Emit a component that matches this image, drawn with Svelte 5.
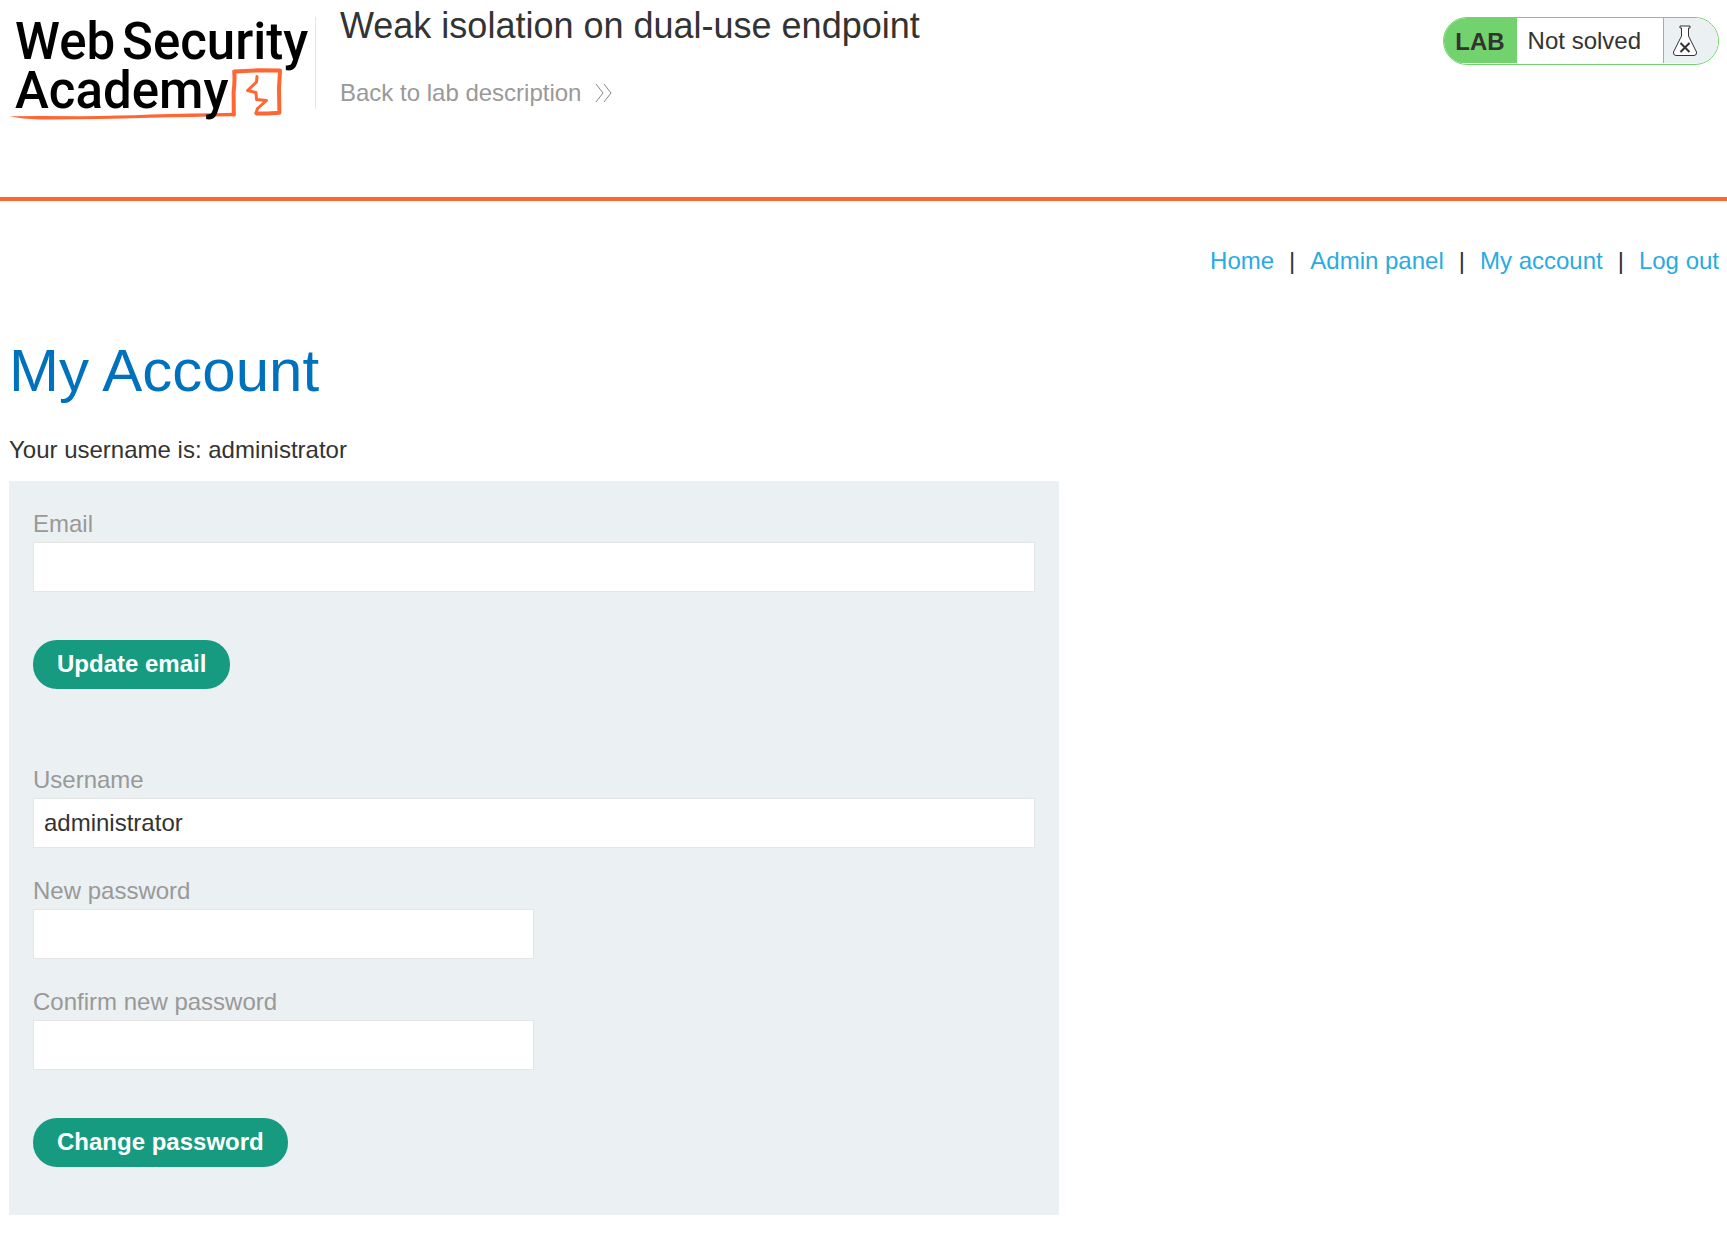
<script>
  const links = ['Home', 'Admin panel', 'My account', 'Log out'];
  let email = $state('');
  let username = $state('administrator');
  let newPassword = $state('');
  let confirmPassword = $state('');
  const stay = (e) => e.preventDefault();
</script>

<header class="banner">
  <a class="logo" href="#academy" aria-label="Web Security Academy">
    <svg width="306" height="108" viewBox="9 17 306 108">
      <path class="swash" d="M9.500 116.300 Q30 115.800 80 116.200 Q120 116 150 114.600 Q190 113.600 235.500 112.800 L235.500 116.300 Q190 116.800 150 117.800 Q90 119.700 40 119.500 Q22 119 9.500 116.300 Z" />
      <path class="box" d="M233.800 114.500 L233.600 92 Q235 80 234.200 71.500 L258 70.300 L280 70.600 L279 88 L279.400 112.800 L268 113.500 L256.500 113.600" />
      <path class="bolt" d="M257 76.500 L256.500 82 L247.500 90.500 L256 92.500 L256.500 99.500 L266.500 100.500 L257.500 108.500 L256 113" />
      <text x="15" y="59">Web</text>
      <text x="122" y="59">Security</text>
      <text x="15" y="108">Academy</text>
    </svg>
  </a>
  <div class="title">
    <h2>Weak isolation on dual-use endpoint</h2>
    <a class="back" href="#description">
      Back to lab description
      <svg width="18" height="20" viewBox="0 0 18 20">
        <path d="M1 1 L8 10 L1 19 M9 1 L16 10 L9 19" />
      </svg>
    </a>
  </div>
  <div class="status">
    <span class="lab">LAB</span>
    <span class="state">Not solved</span>
    <span class="flask">
      <svg width="26" height="32" viewBox="0 0 26 32">
        <path class="glass" d="M8 1 H18 V3 H16.500 V11 L24.500 27 Q25 30.500 22 30.500 H4 Q1 30.500 1.500 27 L9.500 11 V3 H8 Z" />
        <path class="cross" d="M8.500 18 L17.500 27 M17.500 18 L8.500 27" />
      </svg>
    </span>
  </div>
</header>

<main>
  <nav>
    {#each links as link, i}
      {#if i > 0}<span>|</span>{/if}
      <a href={'#' + link.toLowerCase().replace(' ', '-')}>{link}</a>
    {/each}
  </nav>
  <h1>My Account</h1>
  <p>Your username is: administrator</p>
  <div class="panel">
    <form onsubmit={stay}>
      <label for="email">Email</label>
      <input id="email" type="email" bind:value={email} />
      <button type="submit">Update email</button>
    </form>
    <form onsubmit={stay}>
      <label for="username">Username</label>
      <input id="username" type="text" bind:value={username} />
      <label for="new-password">New password</label>
      <input id="new-password" class="half" type="password" bind:value={newPassword} />
      <label for="confirm-password">Confirm new password</label>
      <input id="confirm-password" class="half" type="password" bind:value={confirmPassword} />
      <button type="submit">Change password</button>
    </form>
  </div>
</main>

<style>
  :global(body) {
    background: #fff;
    color: #333332;
    font: 24px/36px 'Liberation Sans', Arial, sans-serif;
  }
  a {
    text-decoration: none;
  }
  .banner {
    display: flex;
    align-items: flex-start;
    box-sizing: border-box;
    min-height: 201px;
    padding: 0 8px 0 9px;
    border-bottom: 4px solid #ff6633;
  }
  .logo {
    flex: none;
    margin-top: 17px;
    height: 92px;
    border-right: 1px solid #e5e5e5;
  }
  .logo svg {
    display: block;
    overflow: visible;
  }
  .logo text {
    font-family: Roboto, sans-serif;
    font-size: 51px;
    font-weight: 500;
    fill: #000;
  }
  .swash {
    fill: #ff6633;
  }
  .box,
  .bolt {
    fill: none;
    stroke: #ff6633;
    stroke-width: 4;
    stroke-linejoin: round;
    stroke-linecap: round;
  }
  .bolt {
    stroke-width: 3;
  }
  .title {
    flex: 1;
    padding-left: 24px;
  }
  h2 {
    margin: 0 0 23px;
    font-size: 36px;
    line-height: 52px;
    font-weight: 400;
  }
  .back {
    display: inline-flex;
    align-items: center;
    gap: 14px;
    color: #999;
  }
  .back svg {
    fill: none;
    stroke: #888;
    stroke-width: 1;
  }
  .status {
    display: flex;
    box-sizing: border-box;
    margin-top: 17px;
    height: 48px;
    padding-bottom: 1px;
    border: 1px solid #72d26e;
    border-radius: 24px;
    overflow: hidden;
    line-height: 46px;
  }
  .lab {
    padding: 0 12px 0 11px;
    background: #72d26e;
    font-weight: 700;
    line-height: 48px;
  }
  .state {
    padding: 0 22px 0 11px;
  }
  .flask {
    display: flex;
    align-items: center;
    padding: 0 20px 0 8px;
    border-left: 1px solid #72d26e;
    background: #ebf0f2;
  }
  .glass {
    fill: #fff;
    stroke: #333332;
    stroke-width: 1;
  }
  .cross {
    stroke: #333332;
    stroke-width: 2;
  }
  main {
    padding: 42px 8px 28px 9px;
  }
  nav {
    display: flex;
    justify-content: flex-end;
    gap: 15px;
  }
  nav a {
    color: #29abe2;
  }
  h1 {
    margin: 56px 0 25px;
    color: #0071bc;
    font-size: 60px;
    line-height: 72px;
    font-weight: 400;
  }
  p {
    margin: 0 0 13px;
  }
  .panel {
    box-sizing: border-box;
    max-width: 1050px;
    padding: 24px 24px 48px;
    background: #ebf0f2;
  }
  form {
    display: flex;
    flex-direction: column;
    align-items: flex-start;
  }
  form + form {
    margin-top: 72px;
  }
  label {
    color: #999;
    line-height: 37px;
  }
  input {
    box-sizing: border-box;
    width: 100%;
    height: 50px;
    margin: 0 0 24px;
    padding: 0 10px;
    border: 1px solid #e5e5e5;
    border-radius: 0;
    background: #fff;
    color: inherit;
    font: inherit;
  }
  .half {
    width: 50%;
  }
  button {
    height: 49px;
    margin-top: 24px;
    padding: 0 24px 1px;
    border: 0;
    border-radius: 24px;
    background: #179b80;
    color: #fff;
    font: inherit;
    font-weight: 700;
    cursor: pointer;
  }
</style>
